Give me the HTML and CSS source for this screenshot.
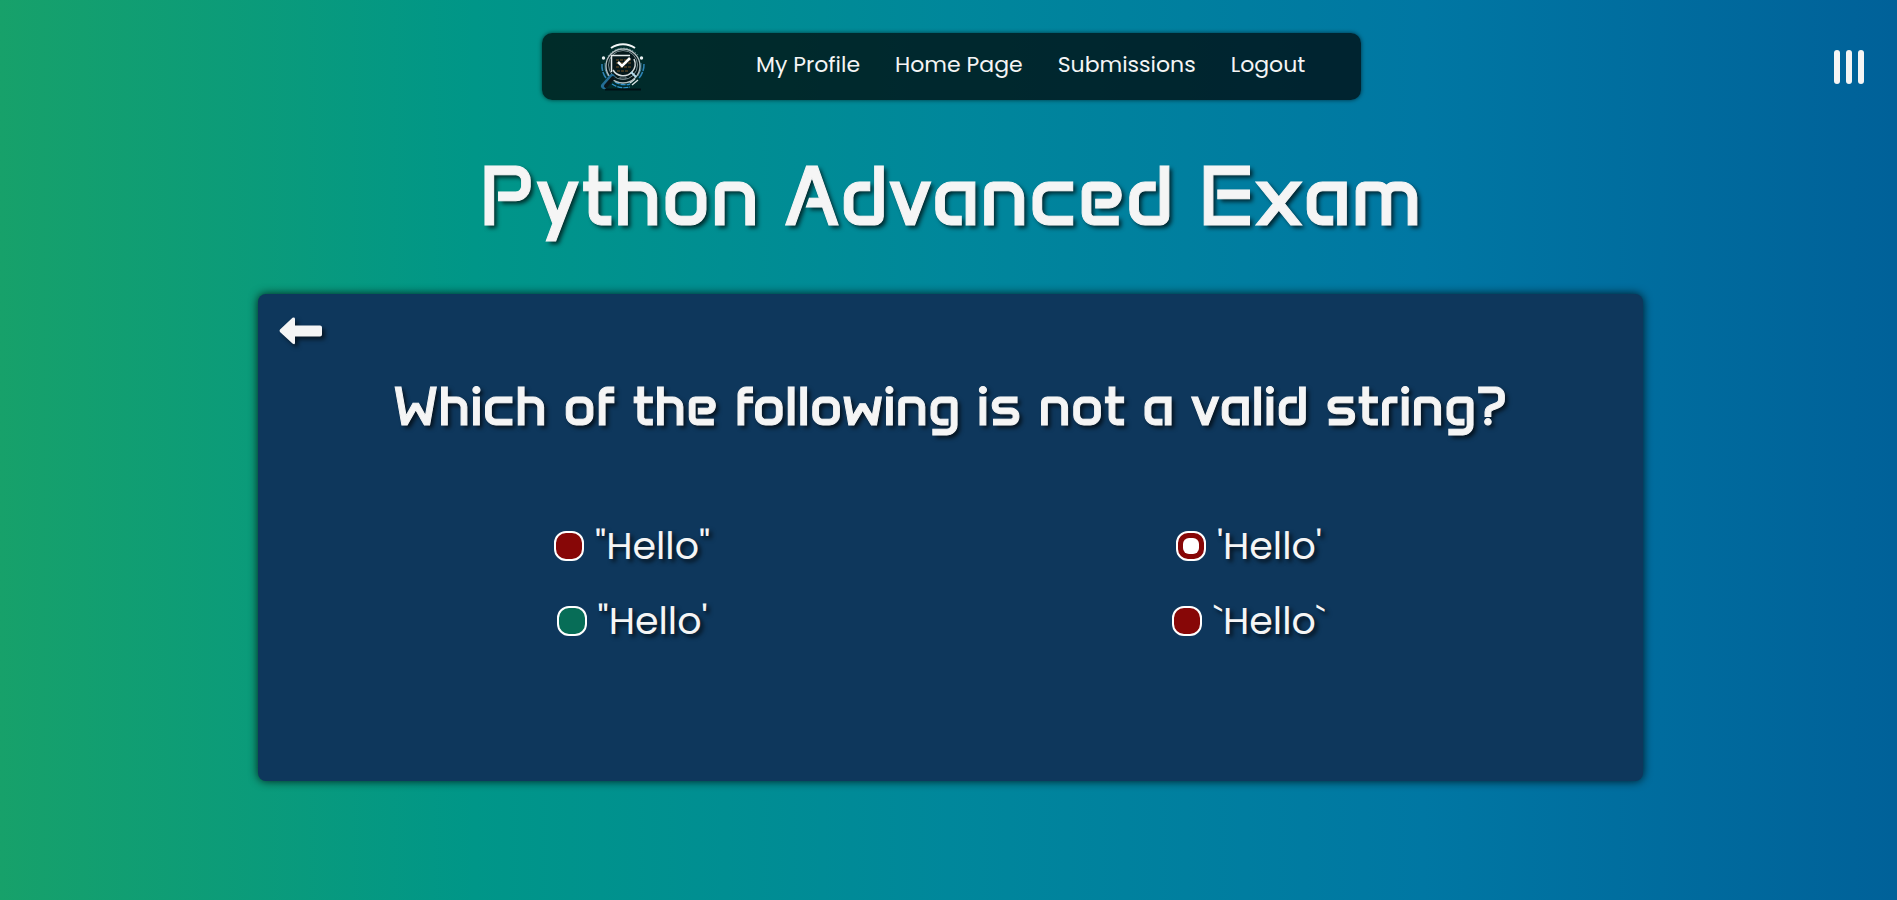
FILE: index.html
```html
<!DOCTYPE html>
<html lang="en">
<head>
<meta charset="utf-8">
<meta name="viewport" content="width=device-width, initial-scale=1">
<title>Python Advanced Exam</title>
<link rel="stylesheet" href="styles.css">
</head>
<body>
<header class="topbar">
  <nav class="nav">
    <a class="logo" href="#" aria-label="Home">
      <svg viewBox="0 0 48 48" width="48" height="48" fill="none" aria-hidden="true">
        <path d="M9 13a19 19 0 0 1 30-1" stroke="#7fa9b0" stroke-width="1" stroke-dasharray="1 2"/>
        <path d="M12 5a21 21 0 0 1 24 0" stroke="#f2f7f7" stroke-width="2"/>
        <path d="M3 21a21 21 0 0 0 4 14M45 21a21 21 0 0 1-5 14" stroke="#2d83b5" stroke-width="1.500" stroke-dasharray="7 1"/>
        <path d="M6 20a18 18 0 0 0 3 13M42 20a18 18 0 0 1-3 13" stroke="#3b7fa0" stroke-width="1"/>
        <path d="M13 41a21 21 0 0 0 18 3M16 39a19 19 0 0 0 15 2" stroke="#2d8fca" stroke-width="1.300" stroke-dasharray="5 1"/>
        <path d="M33 42l6-5M31 40l5-4" stroke="#d9e4e4" stroke-width="1.300"/>
        <path d="M6 46.500h36" stroke="#001014" stroke-width="2"/>
        <circle cx="4.500" cy="15" r="1.700" fill="#e8f0f0"/>
        <circle cx="42.500" cy="15" r="1.700" fill="#e8f0f0"/>
        <circle cx="24" cy="23" r="17" fill="#05181b" stroke="#b4c0c2" stroke-width="1.300"/>
        <circle cx="24" cy="22" r="14.500" stroke="#7c9093" stroke-width="1"/>
        <path d="M12.500 29V12.500H31" stroke="#e2e9e9" stroke-width="1.500"/>
        <path d="M17 17h16M17 20h16M17 24h16M18 28h12" stroke="#7a5526" stroke-width="1" stroke-dasharray="3 1"/>
        <path d="M14 27a12 12 0 0 0 19 2 12 12 0 0 0 2-13" stroke="#d5dcdc" stroke-width="1.500"/>
        <path d="M32 29l5 5" stroke="#b4dcec" stroke-width="2"/>
        <path d="M21 34h6v2h-6z" stroke="#62767a" stroke-width="1"/>
        <path d="M13 34l-8 9" stroke="#236d95" stroke-width="6" stroke-linecap="round"/>
        <path d="M14 35l-7 8" stroke="#0a1518" stroke-width="4" stroke-linecap="round"/>
        <path d="M19 19l4 4 8-8" stroke="#fff" stroke-width="2.500"/>
      </svg>
    </a>
    <ul class="links">
      <li><a href="#">My Profile</a></li>
      <li><a href="#">Home Page</a></li>
      <li><a href="#">Submissions</a></li>
      <li><a href="#">Logout</a></li>
    </ul>
  </nav>
  <button class="menu" type="button" aria-label="Menu"><span></span><span></span><span></span></button>
</header>
<main class="page">
  <h1 class="title">Python Advanced Exam</h1>
  <form class="card">
    <button class="back" type="button" aria-label="Back">
      <svg viewBox="0 0 44 28" width="44" height="28" aria-hidden="true">
        <path d="M1 12.500 13.500.800Q16 0 16 2V8.500H41Q43 8.500 43 10.500V17.500Q43 19.500 41 19.500H16V26Q16 28 13.500 26.500L1 15Q0 13.700 1 12.500Z" fill="#f5f5f5"/>
      </svg>
    </button>
    <fieldset class="quiz">
      <legend class="question">Which of the following is not a valid string?</legend>
      <div class="options">
        <label class="option"><input class="radio" type="radio" name="answer"><span>"Hello"</span></label>
        <label class="option"><input class="radio" type="radio" name="answer" checked><span>'Hello'</span></label>
        <label class="option"><input class="radio correct" type="radio" name="answer"><span>"Hello'</span></label>
        <label class="option"><input class="radio" type="radio" name="answer"><span>`Hello`</span></label>
      </div>
    </fieldset>
  </form>
</main>
</body>
</html>
```
FILE: styles.css
```css
* { box-sizing: border-box; }

body {
  margin: 0;
  min-height: 100vh;
  color: #f5f5f5;
  font-family: Poppins, Inter, "Liberation Sans", sans-serif;
  background: linear-gradient(to right, #17a16a, #009688, #00879b, #0077a3, #006199);
}

.topbar {
  display: grid;
  grid-template-columns: 1fr auto 1fr;
  align-items: center;
  padding: 33px 33px 0 39px;
}

.nav {
  grid-column: 2;
  display: flex;
  align-items: center;
  justify-content: space-between;
  width: 43.2vw;
  min-height: 67px;
  padding: 0 56px 0 57px;
  border-radius: 10px;
  background: rgba(0, 0, 0, 0.7);
  box-shadow: 0 0 4px rgba(0, 0, 0, 0.6);
}

.logo { display: flex; }

.links {
  display: flex;
  gap: 35px;
  margin: 0;
  padding: 0 0 4px;
  list-style: none;
}

.links a {
  color: #f5f5f5;
  font-size: 22px;
  line-height: 32px;
  text-decoration: none;
  white-space: nowrap;
}

.menu {
  justify-self: end;
  display: flex;
  gap: 6px;
  padding: 0;
  border: 0;
  background: none;
}

.menu span {
  width: 6px;
  height: 34px;
  border-radius: 3px;
  background: #f5f5f5;
}

.page { padding-left: 4px; }

.title {
  margin: 48px 0 50px;
  font: 400 84px/96px Anta, "DejaVu Sans", sans-serif;
  text-align: center;
  text-shadow: 3px 3px 4px rgba(0, 0, 0, 0.7);
  -webkit-text-stroke: 1px #f5f5f5;
}

.card {
  width: 73.2%;
  min-height: 487px;
  margin: 0 auto;
  padding: 23px 21px;
  border-radius: 8px;
  background: #0e375c;
  box-shadow: 0 0 10px rgba(0, 0, 0, 0.8);
}

.back {
  display: block;
  padding: 0;
  border: 0;
  background: none;
  filter: drop-shadow(3px 3px 2px rgba(0, 0, 0, 0.6));
}

.back svg { display: block; }

.quiz {
  margin: 0;
  padding: 0;
  border: 0;
}

.question {
  width: 100%;
  padding: 29px 0 0;
  font: 400 56px/64px Anta, "DejaVu Sans", sans-serif;
  text-align: center;
  text-shadow: 3px 3px 4px rgba(0, 0, 0, 0.7);
  -webkit-text-stroke: 1px #f5f5f5;
}

.options {
  display: grid;
  grid-template-columns: 1fr 1fr;
  justify-items: center;
  row-gap: 19px;
  padding: 80px 56px 0 54px;
}

.option {
  display: flex;
  align-items: center;
  gap: 11px;
  padding-right: 18px;
  font-size: 38px;
  line-height: 56px;
  text-shadow: 3px 3px 4px rgba(0, 0, 0, 0.7);
}

.radio {
  appearance: none;
  display: grid;
  place-items: center;
  width: 30px;
  height: 30px;
  margin: 0;
  border: 2px solid #fff;
  border-radius: 12px;
  background: #870707;
}

.radio.correct { background: #076d57; }

.radio:checked::after {
  content: "";
  width: 16px;
  height: 16px;
  border-radius: 6px;
  background: #fff;
}
```
